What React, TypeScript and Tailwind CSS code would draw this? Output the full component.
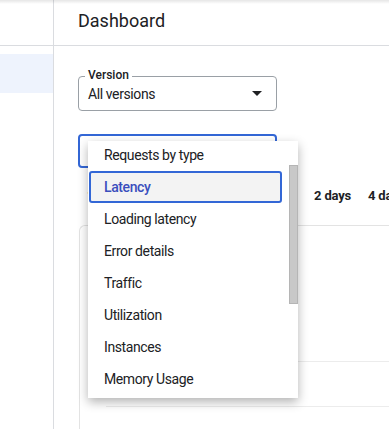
import React from 'react';

const options = [
  'Requests by type',
  'Latency',
  'Loading latency',
  'Error details',
  'Traffic',
  'Utilization',
  'Instances',
  'Memory Usage',
];

const ranges = ['1 hour', '6 hours', '12 hours', '1 day', '2 days', '4 days'];

export default function App() {
  return (
    <div className="relative flex h-[429px] w-[389px] overflow-hidden bg-white font-['Roboto',sans-serif] text-[#202124]">
      {/* top shadow */}
      <div className="pointer-events-none absolute inset-x-0 top-0 h-[4px] bg-gradient-to-b from-black/10 to-transparent" />

      {/* sidebar */}
      <div className="w-[54px] shrink-0 border-r border-[#dadce0]">
        <div className="h-[46px] border-b border-[#dadce0]" />
        <div className="mt-[8px] h-[39px] bg-[#eef3fd]" />
      </div>

      {/* main */}
      <div className="relative flex-1">
        <div className="flex h-[46px] items-center border-b border-[#dadce0] pb-[4px] pl-[24px] text-[18px]">
          Dashboard
        </div>

        <div className="pl-[24px]">
          {/* version select */}
          <div className="relative mt-[30px] flex h-[35px] w-[199px] items-center justify-between rounded-[4px] border border-[#9aa0a6] pl-[9px] pr-[14px]">
            <span className="absolute -top-[10px] left-[6px] bg-white px-[3px] text-[12px] font-medium leading-[16px]">
              Version
            </span>
            <span className="pt-[2px] text-[14px] tracking-[-0.4px]">All versions</span>
            <svg width="10" height="5" viewBox="0 0 10 5">
              <path d="M0 0h10L5 5z" fill="#202124" />
            </svg>
          </div>

          {/* focused select (behind menu) */}
          <div className="mt-[23px] h-[34px] w-[199px] rounded-[4px] border-2 border-[#3367d6]" />

          {/* time ranges */}
          <div className="mt-[20px] flex gap-[17px] whitespace-nowrap pl-[9px] text-[13px] font-bold leading-[16px] tracking-[-0.2px]">
            {ranges.map((r) => (
              <span key={r}>{r}</span>
            ))}
          </div>

          {/* card */}
          <div className="ml-[1px] mt-[21px] h-[220px] rounded-tl-[6px] border-l border-t border-[#e3e3e3] pl-[26px]">
            <div className="h-[136px] border-b border-[#ececec]" />
            <div className="h-[45px] border-b border-[#ececec]" />
          </div>
        </div>

        {/* open menu */}
        <div className="absolute left-[34px] top-[141px] h-[257px] w-[210px] overflow-hidden bg-white shadow-[0_4px_10px_rgba(0,0,0,0.3)]">
          <div className="-mt-[2px] w-[200px] text-[14px] tracking-[-0.4px]">
            {options.map((o) =>
              o === 'Latency' ? (
                <div
                  key={o}
                  className="ml-[1px] mr-[6px] flex h-[32px] items-center rounded-[3px] border-2 border-[#3367d6] bg-[#f3f3f3] pl-[13px] font-medium text-[#3a4ebd]"
                >
                  {o}
                </div>
              ) : (
                <div key={o} className="flex h-[32px] items-center pl-[16px]">
                  {o}
                </div>
              )
            )}
          </div>
          <div className="absolute left-[201px] top-[24px] h-[139px] w-[9px] border border-[#b5b5b5] bg-[#c8c8c8]" />
        </div>
      </div>
    </div>
  );
}
